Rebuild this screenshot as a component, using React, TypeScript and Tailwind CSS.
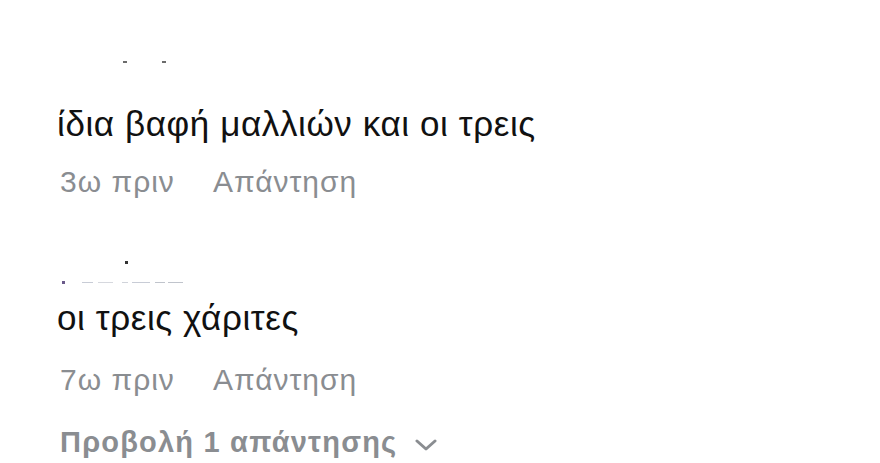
import React from 'react';

interface Reply {
  text: string;
  time: string;
}

const replies: Reply[] = [
  { text: 'ίδια βαφή μαλλιών και οι τρεις', time: '3ω πριν' },
  { text: 'οι τρεις χάριτες', time: '7ω πριν' },
];

const ChevronDown = () => (
  <svg width="22" height="12" viewBox="0 0 22 12" fill="none" className="ml-[18px] mt-[6px]">
    <path d="M2 2 L11 10 L20 2" stroke="#8a8d91" strokeWidth="3" strokeLinecap="round" strokeLinejoin="round" />
  </svg>
);

// clipped remnants of the author-name lines above each comment
const TopCrumbs = () => (
  <div className="h-[104px] pt-[61px] flex items-start pl-[66px] gap-[35px]">
    <span className="block w-[4px] h-[2px] bg-[#6b6b6b]" />
    <span className="block w-[4px] h-[2px] bg-[#6b6b6b]" />
  </div>
);

const MidCrumbs = () => (
  <div className="h-[99px] pt-[62px] flex flex-col">
    <span className="block ml-[68px] w-[3px] h-[3px] bg-[#333]" />
    <div className="flex items-center mt-[17px]">
      <span className="block ml-[5px] w-[3px] h-[3px] bg-[#6a5a8a]" />
      <span className="block ml-[17px] w-[11px] h-[1px] bg-[#c8ccd6]" />
      <span className="block ml-[5px] w-[15px] h-[1px] bg-[#d6d8de]" />
      <span className="block ml-[9px] w-[6px] h-[1px] bg-[#d0d3da]" />
      <span className="block ml-[4px] w-[18px] h-[1px] bg-[#c8ccd6]" />
      <span className="block ml-[5px] w-[10px] h-[1px] bg-[#c0c4cc]" />
      <span className="block ml-[3px] w-[15px] h-[1px] bg-[#c0c4cc]" />
    </div>
  </div>
);

const Meta = ({ time }: { time: string }) => (
  <div className="h-[34px] leading-[34px] flex text-[30px] tracking-[1px] text-[#8a8d91] pl-[3px]">
    <span>{time}</span>
    <span className="ml-[38px]">Απάντηση</span>
  </div>
);

export default function App() {
  return (
    <div className="w-[880px] h-[463px] bg-white overflow-hidden pl-[57px] font-['Liberation_Sans','Noto_Sans',sans-serif]">
      <TopCrumbs />
      <div className="h-[40px] leading-[40px] text-[35px] tracking-[0.6px] text-[#111] whitespace-nowrap">{replies[0].text}</div>
      <div className="mt-[21px]">
        <Meta time={replies[0].time} />
      </div>
      <MidCrumbs />
      <div className="h-[40px] leading-[40px] text-[35px] tracking-[0.6px] text-[#111] whitespace-nowrap">{replies[1].text}</div>
      <div className="mt-[25px]">
        <Meta time={replies[1].time} />
      </div>
      <div className="mt-[28px] h-[34px] leading-[34px] flex items-center text-[29px] tracking-[1.2px] font-bold text-[#8a8d91] pl-[3px] whitespace-nowrap">
        <span>Προβολή 1 απάντησης</span>
        <ChevronDown />
      </div>
    </div>
  );
}
